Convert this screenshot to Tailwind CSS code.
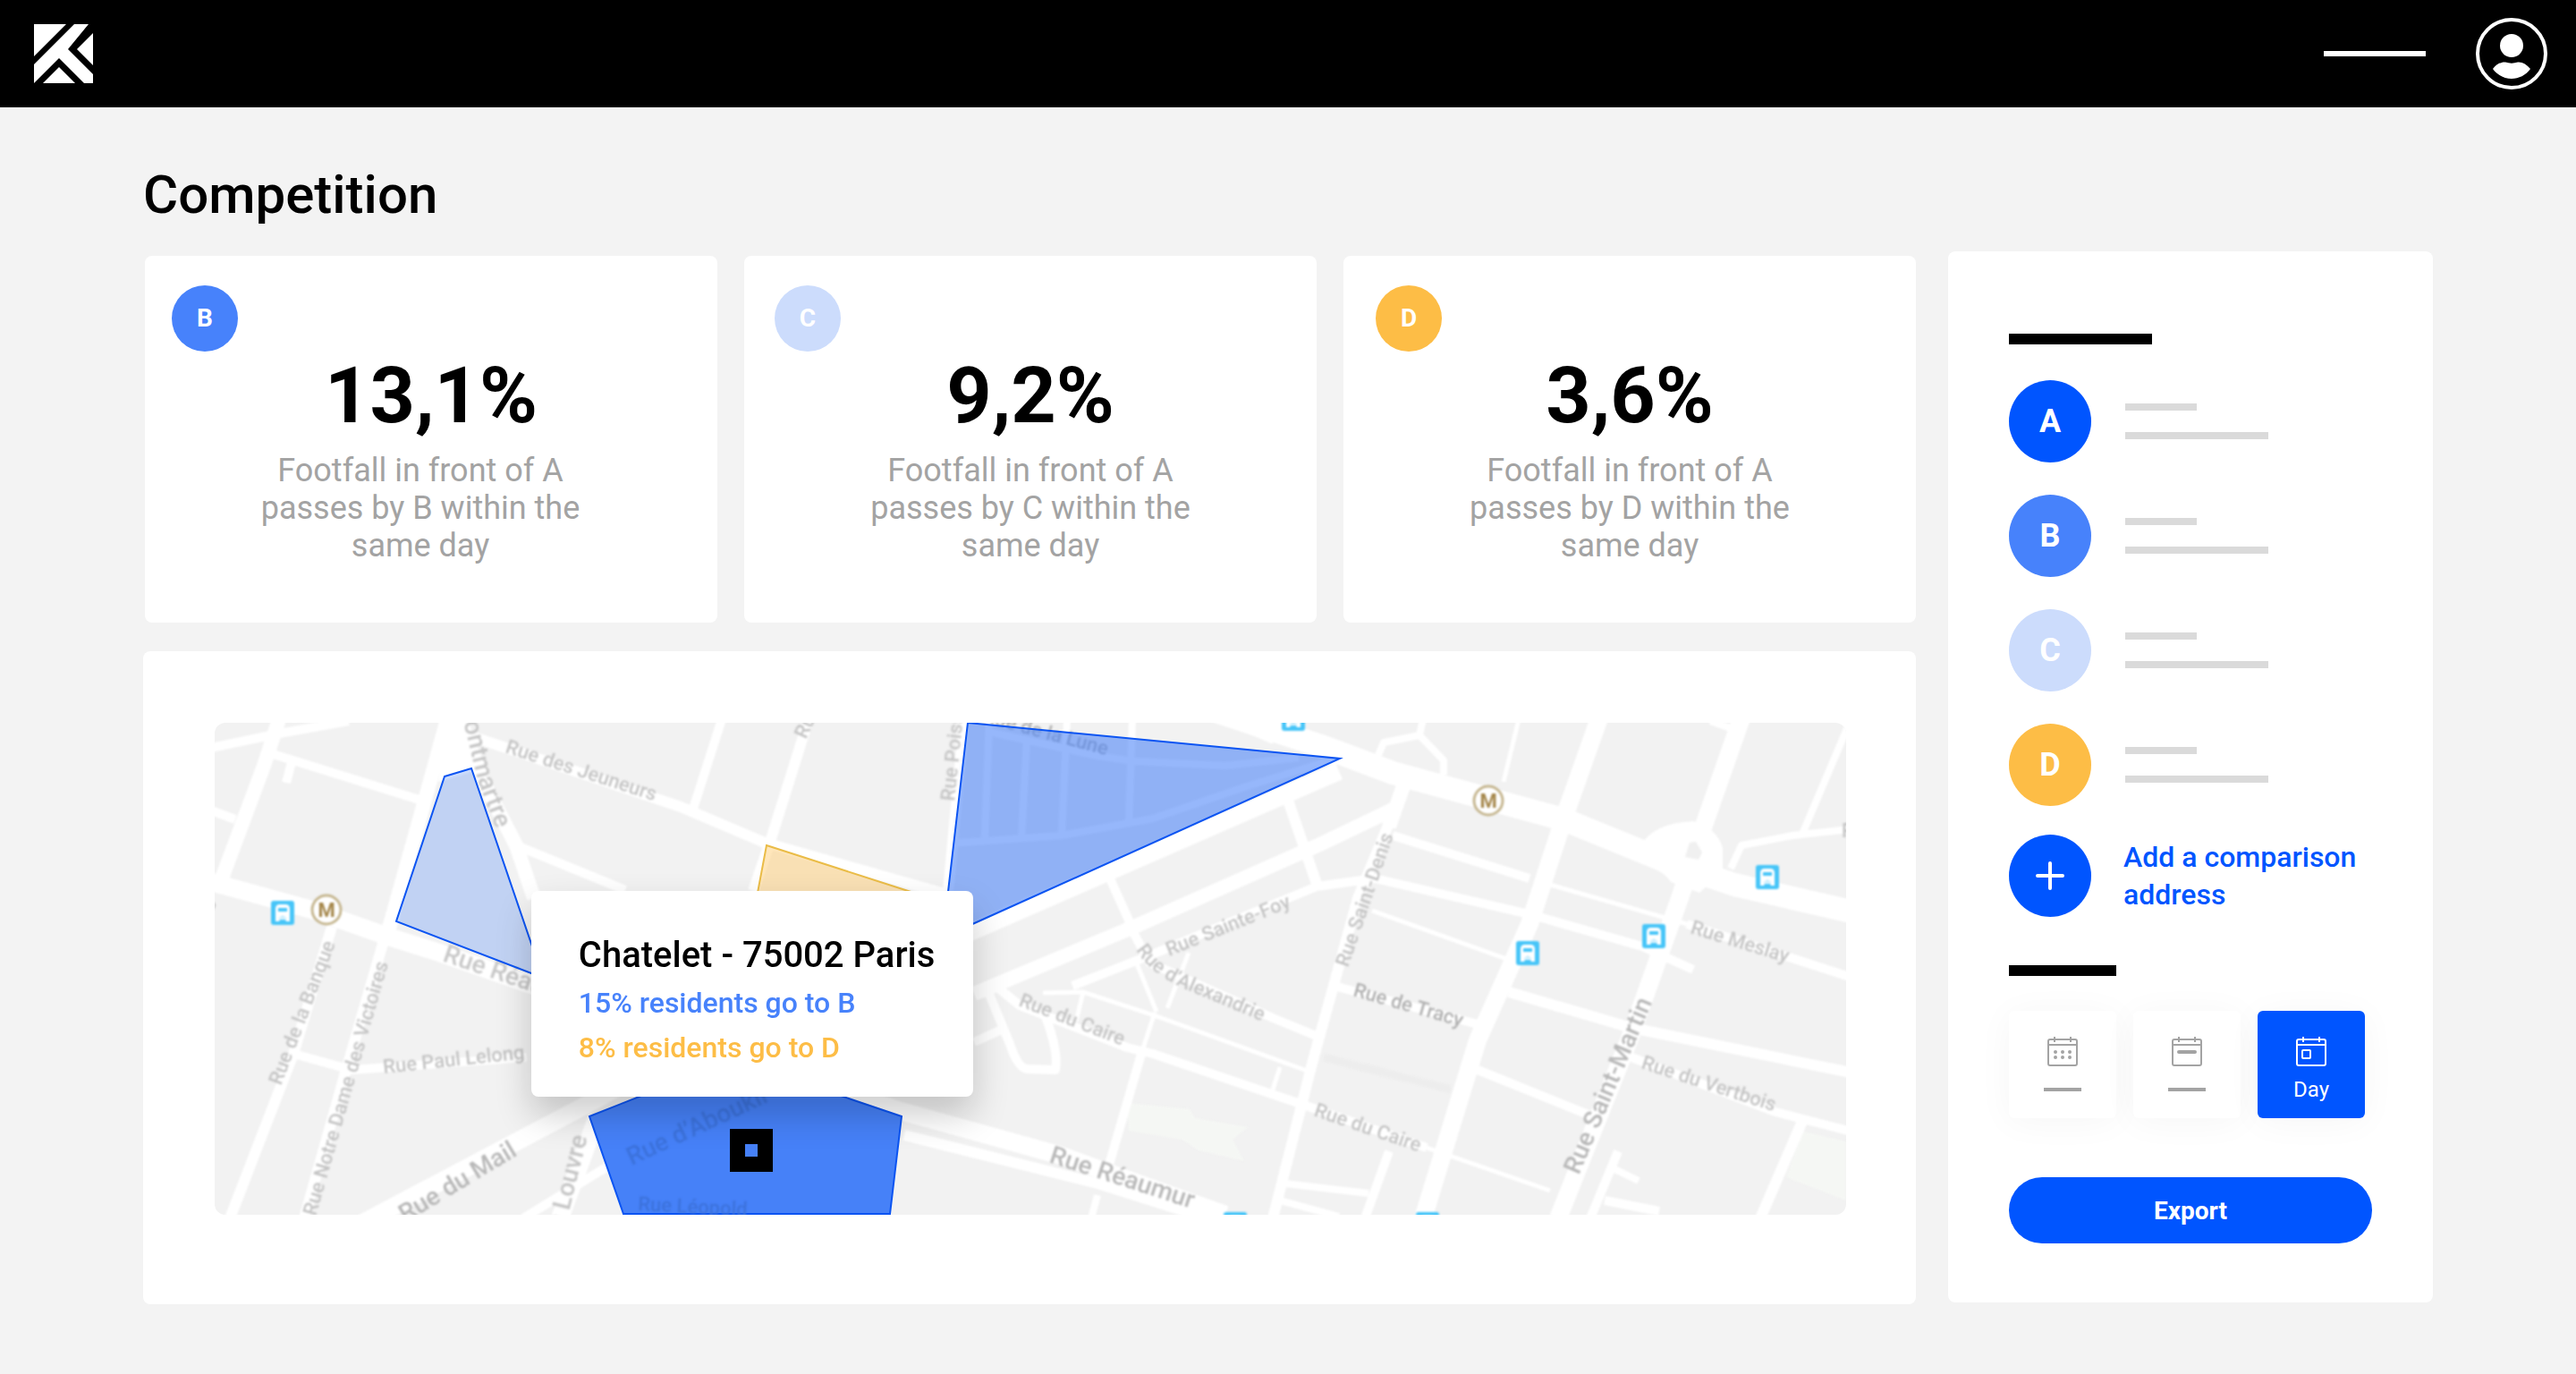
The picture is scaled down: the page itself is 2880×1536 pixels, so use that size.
<!DOCTYPE html>
<html lang="en">
<head>
<meta charset="utf-8">
<meta name="viewport" content="width=device-width, initial-scale=1">
<title>Competition</title>
<script src="https://cdn.jsdelivr.net/npm/@tailwindcss/browser@4"></script>
</head>
<body class="min-h-screen bg-[#f3f3f3] font-['Roboto',sans-serif] text-black">

<header class="flex h-[120px] items-center justify-between bg-black pr-8 pl-[38px]">
  <a href="#" aria-label="Home">
    <svg class="block size-[66px]" viewBox="0 0 66 66" fill="#fff" aria-hidden="true">
      <path d="M0 0H36L0 36Z"/>
      <path d="M45 0H61L38 28L66 56V66H56L28 38L0 66V45Z"/>
      <path d="M66 10V46L48 28Z"/>
      <path d="M28 48L46 66H10Z"/>
    </svg>
  </a>
  <div class="flex items-center gap-14">
    <div class="h-1.5 w-[114px] bg-white"></div>
    <button type="button" aria-label="Account" class="size-20">
      <svg viewBox="0 0 80 80" aria-hidden="true">
        <circle cx="40" cy="40" r="38" fill="none" stroke="#fff" stroke-width="4"/>
        <circle cx="40" cy="31" r="13" fill="#fff"/>
        <path d="M19 57C23 52 28 49 33 49.500C38 51 42 51 47 49.500C52 49 57 52 61 57C56 64 48 68 40 68S24 64 19 57Z" fill="#fff"/>
      </svg>
    </button>
  </div>
</header>

<main class="px-40 pt-[62px] pb-[78px]">
  <h1 class="mb-[27px] text-[60px] leading-[72px] font-medium">Competition</h1>

  <div class="flex items-start gap-9">
    <div class="min-w-0 flex-1 pt-[5px]">
      <section class="grid grid-cols-3 gap-[30px] pl-0.5">
        <article class="h-[410px] rounded-lg bg-white pt-[33px] text-center">
          <div class="ml-[30px] flex size-[74px] items-center justify-center rounded-full bg-[#4782fb] text-[28px] leading-8 font-bold text-white">B</div>
          <p class="mt-[5px] text-[88px] leading-[88px] font-bold">13,1%</p>
          <p class="mt-[19px] pr-6 text-4xl leading-[42px] text-[#a3a3a3]">Footfall in front of A<br>passes by B within the<br>same day</p>
        </article>
        <article class="h-[410px] rounded-lg bg-white pt-[33px] text-center">
          <div class="ml-[34px] flex size-[74px] items-center justify-center rounded-full bg-[#ccdcfc] text-[28px] leading-8 font-bold text-white">C</div>
          <p class="mt-[5px] text-[88px] leading-[88px] font-bold">9,2%</p>
          <p class="mt-[19px] text-4xl leading-[42px] text-[#a3a3a3]">Footfall in front of A<br>passes by C within the<br>same day</p>
        </article>
        <article class="h-[410px] rounded-lg bg-white pt-[33px] text-center">
          <div class="ml-9 flex size-[74px] items-center justify-center rounded-full bg-[#fdbd46] text-[28px] leading-8 font-bold text-white">D</div>
          <p class="mt-[5px] text-[88px] leading-[88px] font-bold">3,6%</p>
          <p class="mt-[19px] text-4xl leading-[42px] text-[#a3a3a3]">Footfall in front of A<br>passes by D within the<br>same day</p>
        </article>
      </section>

      <section class="mt-8 rounded-lg bg-white pt-20 pr-[78px] pb-[100px] pl-20">
        <div class="relative">
          <svg class="block w-full rounded-xl bg-[#f2f2f2]" viewBox="0 0 1824 550" role="img" aria-label="Map of the Chatelet area">
            <defs>
              <g id="bus">
                <rect x="-13" y="-14" width="26" height="27" rx="3" fill="#47c5f8"/>
                <path d="M-8 9V-5Q-8 -10 -3 -10H3Q8 -10 8 -5V9H4L3 7H-3L-4 9Z" fill="#fff"/>
                <rect x="-5" y="-6" width="10" height="4" fill="#47c5f8"/>
                <path d="M-5 6L0 2L5 6Z" fill="#47c5f8" opacity=".3"/>
              </g>
              <g id="metro">
                <circle r="16" fill="#fff" stroke="#c6b791" stroke-width="3"/>
                <text y="8" text-anchor="middle" font-size="22" font-weight="700" fill="#a5874b">M</text>
              </g>
              <path id="alexandrie" d="M1030 254Q1046 280 1084 297L1200 346"/>
              <path id="montmartre" d="M272 -24L282 14L294 64L330 158"/>
            </defs>

            <g class="blur-[1px]">
              <path d="M1020 425L1090 432L1096 442L1155 452L1138 466L1151 490L1100 478L1082 466L1022 456Z" fill="#f5f7f4"/>
              <path d="M1776 457L1824 468V534L1757 508Z" fill="#f5f7f4"/>
              <path d="M1240 374L1382 410" stroke="#ededed" stroke-width="9"/>
              <g fill="none" stroke="#fff" stroke-linejoin="round">
                <g stroke-width="26">
                  <path d="M1110 -16L1240 27L1317 56L1508 108L1623 155L1699 181L1834 212"/>
                </g>
                <g stroke-width="20">
                  <path d="M1549 -8L1508 108L1470 225L1412 355L1351 554"/>
                  <path d="M1708 -8L1661 126L1638 196L1584 348L1502 554"/>
                  <path d="M840 236L1257 54"/>
                  <path d="M-4 178L112 210L194 239L251 257L357 294L767 434L947 484L1130 550"/>
                  <path d="M160 562L410 430L520 370"/>
                  <path d="M428 440L386 554"/>
                </g>
                <g stroke-width="16">
                  <path d="M72 -4L55 48L8 174"/>
                  <path d="M260 -4L231 101L192 240"/>
                  <path d="M274 -4L300 65L337 137L357 196"/>
                  <path d="M849 303L1028 228L1240 134L1317 97"/>
                  <path d="M1332 62L1313 116"/>
                </g>
                <g stroke-width="12">
                  <path d="M131 228L88 370L17 554"/>
                  <path d="M190 240L145 395L100 554"/>
                  <path d="M838 -4L820 188"/>
                  <path d="M1196 75L1232 180"/>
                  <path d="M1313 112L1278 196L1257 272L1228 377L1183 554"/>
                  <path d="M664 -4L622 130L602 188"/>
                  <path d="M1447 301L1584 341L1834 392"/>
                  <path d="M1776 443L1728 554"/>
                  <path d="M284 14L521 94L615 134L820 192"/>
                  <path d="M771 461L987 515L1110 554"/>
                </g>
                <g stroke-width="10">
                  <path d="M-4 28L72 12L150 -2"/>
                  <path d="M62 34L235 88"/>
                  <path d="M86 44L80 67"/>
                  <path d="M-4 98L23 108"/>
                  <path d="M567 -4L535 96"/>
                  <path d="M337 137L459 187"/>
                  <path d="M88 370L153 388L349 374"/>
                  <path d="M345 554L431 501L470 480"/>
                  <path d="M959 294L1053 257L1232 183L1297 174L1470 214L1596 250L1653 276"/>
                  <path d="M1000 172L1028 234"/>
                  <path d="M1028 236L1045 268L1183 330L1234 351"/>
                  <path d="M873 294L900 316L1020 363L1049 370L1220 428L1355 475"/>
                  <path d="M1036 370L1000 494"/>
                  <path d="M849 357L884 341"/>
                  <path d="M865 301L889 359Q898 386 908 387L940 388Q944 368 928 326"/>
                  <path d="M1313 479L1286 554"/>
                  <path d="M1317 126L1470 174"/>
                  <path d="M1646 225L1834 286"/>
                  <path d="M1251 294L1412 337"/>
                  <path d="M1412 388L1538 439"/>
                  <path d="M1584 374L1745 435L1834 458"/>
                  <path d="M1569 479L1538 554"/>
                  <path d="M1554 534L1615 546"/>
                </g>
                <g stroke-width="8">
                  <path d="M866 -4L861 128M908 18L902 128M953 -4L947 126M1026 -4L1022 114"/>
                  <path d="M820 135L947 126L1049 107L1151 72L1257 39"/>
                  <path d="M865 10L987 37L1028 43L1130 48L1212 39"/>
                  <path d="M1130 -4L1184 20"/>
                  <path d="M987 528L980 554"/>
                  <path d="M1196 515L1290 526M1191 534L1257 552"/>
                  <path d="M1351 -4L1347 14L1307 22L1301 36M1347 14L1374 42V58"/>
                  <path d="M1672 -2L1700 8"/>
                  <path d="M1826 4L1776 122M1828 119L1764 126L1707 137L1695 163"/>
                  <path d="M1561 497L1592 512"/>
                </g>
                <g stroke-width="5">
                  <path d="M1028 262L1053 323M1089 257L1065 319"/>
                  <path d="M926 302L971 301L1053 328L1224 390M971 301L963 334"/>
                  <path d="M1051 324L1036 370M1191 385L1183 410"/>
                  <path d="M1458 -4L1441 66"/>
                  <path d="M1493 181L1646 225"/>
                  <path d="M1294 210L1447 265"/>
                  <path d="M1355 475L1493 523"/>
                </g>
              </g>
              <path d="M1594 138Q1608 112 1653 110Q1680 118 1686 140V166L1660 190L1628 178Q1622 168 1604 160Z" fill="#fff"/>
              <path d="M1644 150L1649 134L1656 133L1663 145L1659 153Z" fill="#f0f0f0"/>
              <path d="M262 -2H284L298 52L250 66Z" fill="#fff"/>

              <g font-size="22" font-weight="500" fill="#c4c4c4">
                <text transform="translate(324 33) rotate(18)">Rue des Jeuneurs</text>
                <text transform="translate(1267 274) rotate(-71)">Rue Saint-Denis</text>
                <text transform="translate(1067 261) rotate(-22)">Rue Sainte-Foy</text>
                <text><textPath href="#alexandrie">Rue d’Alexandrie</textPath></text>
                <text transform="translate(898 316) rotate(21)">Rue du Caire</text>
                <text transform="translate(1228 439) rotate(19)">Rue du Caire</text>
                <text transform="translate(74 406) rotate(-69)">Rue de la Banque</text>
                <text transform="translate(113 552) rotate(-74)">Rue Notre Dame des Victoires</text>
                <text transform="translate(189 392) rotate(-6)">Rue Paul Lelong</text>
                <text transform="translate(858 -1) rotate(15)" fill="#b4b4b4">Rue de la Lune</text>
                <text transform="translate(827 88) rotate(-84)">Rue Poissonnière</text>
                <text transform="translate(661 19) rotate(-65)">Rue</text>
                <text transform="translate(1272 305) rotate(16)" fill="#b0b0b0">Rue de Tracy</text>
                <text transform="translate(1649 235) rotate(17)">Rue Meslay</text>
                <text transform="translate(1594 386) rotate(18)">Rue du Vertbois</text>
                <text transform="translate(1819 128)">R</text>
                <text transform="translate(-2 212) rotate(-69)">e</text>
              </g>
              <g font-size="28" font-weight="500" fill="#b8b8b8">
                <text transform="translate(1525 506) rotate(-67)">Rue Saint-Martin</text>
                <text transform="translate(932 491) rotate(18)">Rue Réaumur</text>
                <text transform="translate(254 266) rotate(19)" fill="#c8c8c8">Rue Réaumur</text>
                <text transform="translate(213 559) rotate(-31)">Rue du Mail</text>
                <text transform="translate(387 583) rotate(-76)" fill="#c4c4c4">du Louvre</text>
                <text fill="#c6c6c6"><textPath href="#montmartre">Montmartre</textPath></text>
              </g>

              <use href="#metro" x="125" y="209"/>
              <use href="#metro" x="1424" y="87"/>
              <use href="#bus" x="76" y="213"/>
              <use href="#bus" x="1468" y="258"/>
              <use href="#bus" x="1609" y="239"/>
              <use href="#bus" x="1736" y="173"/>
              <use href="#bus" x="1206" y="-4"/>
              <use href="#bus" x="1141" y="561"/>
              <use href="#bus" x="1356" y="561"/>
            </g>

            <!-- catchment areas -->
            <g stroke="#0b54f2" stroke-width="2">
              <path d="M257 60L287 51L367 285L203 222Z" fill="#4681f8" fill-opacity=".28"/>
              <path d="M842 0L1258 40L814 240Z" fill="#4681f8" fill-opacity=".57"/>
              <path d="M419 440L520 400H650L768 440L755 549H457Z" fill="#4681f8"/>
              <path d="M617 137L800 196L760 300L590 280Z" fill="#ffce76" fill-opacity=".5" stroke="#eabc47"/>
            </g>
            <g class="blur-[1px]" fill="#3c72dc" font-weight="500">
              <text font-size="28" transform="translate(466 495) rotate(-25)">Rue d’Aboukir</text>
              <text font-size="22" transform="translate(473 545) rotate(3)">Rue Léopold</text>
            </g>
            <rect x="576" y="454" width="48" height="48"/>
            <rect x="593" y="471" width="14" height="14" fill="#4681f8"/>
          </svg>

          <div class="absolute top-[34.2%] left-[19.4%] h-[230px] w-[494px] rounded-lg bg-white pt-12 pl-[53px] shadow-[0_20px_40px_rgba(0,0,0,0.2)]">
            <h2 class="mb-1 text-[40px] leading-[48px] font-medium whitespace-nowrap">Chatelet - 75002 Paris</h2>
            <p class="text-[32px] leading-[50px] font-medium text-[#4782fb]">15% residents go to B</p>
            <p class="text-[32px] leading-[50px] font-medium text-[#fdbd46]">8% residents go to D</p>
          </div>
        </div>
      </section>
    </div>

    <aside class="w-[542px] shrink-0 rounded-lg bg-white px-[68px] pt-[92px] pb-[66px]">
      <div class="h-3 w-40 bg-black"></div>
      <ul class="mt-10 flex flex-col gap-9">
        <li class="flex items-center gap-[38px]">
          <span class="flex size-[92px] items-center justify-center rounded-full bg-[#0055ff] text-4xl font-bold text-white">A</span>
          <span class="flex flex-col gap-6"><span class="h-2 w-20 bg-[#dadada]"></span><span class="h-2 w-40 bg-[#dadada]"></span></span>
        </li>
        <li class="flex items-center gap-[38px]">
          <span class="flex size-[92px] items-center justify-center rounded-full bg-[#4782fb] text-4xl font-bold text-white">B</span>
          <span class="flex flex-col gap-6"><span class="h-2 w-20 bg-[#dadada]"></span><span class="h-2 w-40 bg-[#dadada]"></span></span>
        </li>
        <li class="flex items-center gap-[38px]">
          <span class="flex size-[92px] items-center justify-center rounded-full bg-[#ccdcfc] text-4xl font-bold text-white">C</span>
          <span class="flex flex-col gap-6"><span class="h-2 w-20 bg-[#dadada]"></span><span class="h-2 w-40 bg-[#dadada]"></span></span>
        </li>
        <li class="flex items-center gap-[38px]">
          <span class="flex size-[92px] items-center justify-center rounded-full bg-[#fdbd46] text-4xl font-bold text-white">D</span>
          <span class="flex flex-col gap-6"><span class="h-2 w-20 bg-[#dadada]"></span><span class="h-2 w-40 bg-[#dadada]"></span></span>
        </li>
      </ul>
      <button type="button" class="mt-8 flex w-full items-center gap-9 text-left text-[32px] leading-[42px] font-medium text-[#0055ff]">
        <span class="flex size-[92px] shrink-0 items-center justify-center rounded-full bg-[#0055ff]">
          <svg class="size-8" viewBox="0 0 32 32" fill="none" stroke="#fff" stroke-width="4" stroke-linecap="round" aria-hidden="true"><path d="M16 2V30M2 16H30"/></svg>
        </span>
        <span>Add a comparison<br>address</span>
      </button>

      <div class="mt-[54px] h-3 w-[120px] bg-black"></div>
      <div class="mt-[39px] flex gap-[19px]">
        <button type="button" aria-label="Month" class="flex size-[120px] flex-col items-center gap-3 rounded-md bg-white pt-7 text-[#a3a3a3] shadow-[0_4px_40px_rgba(0,0,0,0.04)]">
          <svg class="size-[34px] shrink-0" viewBox="0 0 34 34" fill="none" stroke="currentColor" stroke-width="2" aria-hidden="true">
            <rect x="1" y="4" width="32" height="29" rx="2"/><path d="M1 10H33M8 1V7M26 1V7"/>
            <g fill="currentColor" stroke="none"><circle cx="9" cy="18" r="2"/><circle cx="17" cy="18" r="2"/><circle cx="25" cy="18" r="2"/><circle cx="9" cy="24" r="2"/><circle cx="17" cy="24" r="2"/><circle cx="25" cy="24" r="2"/></g>
          </svg>
          <span class="flex h-7 items-center"><span class="h-1 w-[42px] bg-[#a3a3a3]"></span></span>
        </button>
        <button type="button" aria-label="Week" class="flex size-[120px] flex-col items-center gap-3 rounded-md bg-white pt-7 text-[#a3a3a3] shadow-[0_4px_40px_rgba(0,0,0,0.04)]">
          <svg class="size-[34px] shrink-0" viewBox="0 0 34 34" fill="none" stroke="currentColor" stroke-width="2" aria-hidden="true">
            <rect x="1" y="4" width="32" height="29" rx="2"/><path d="M1 10H33M8 1V7M26 1V7"/><path d="M8 18H26" stroke-width="4" stroke-linecap="round"/>
          </svg>
          <span class="flex h-7 items-center"><span class="h-1 w-[42px] bg-[#a3a3a3]"></span></span>
        </button>
        <button type="button" aria-pressed="true" class="flex size-[120px] flex-col items-center gap-3 rounded-md bg-[#0055ff] pt-7 text-2xl leading-7 text-white shadow-[0_4px_40px_rgba(0,0,0,0.04)]">
          <svg class="size-[34px] shrink-0" viewBox="0 0 34 34" fill="none" stroke="currentColor" stroke-width="2" aria-hidden="true">
            <rect x="1" y="4" width="32" height="29" rx="2"/><path d="M1 10H33M8 1V7M26 1V7"/><rect x="7" y="16" width="9" height="9" rx="1"/>
          </svg>
          <span class="leading-7">Day</span>
        </button>
      </div>

      <button type="button" class="mt-[66px] h-[74px] w-full rounded-full bg-[#0055ff] pt-0.5 text-[28px] leading-8 font-bold text-white">Export</button>
    </aside>
  </div>
</main>
</body>
</html>
